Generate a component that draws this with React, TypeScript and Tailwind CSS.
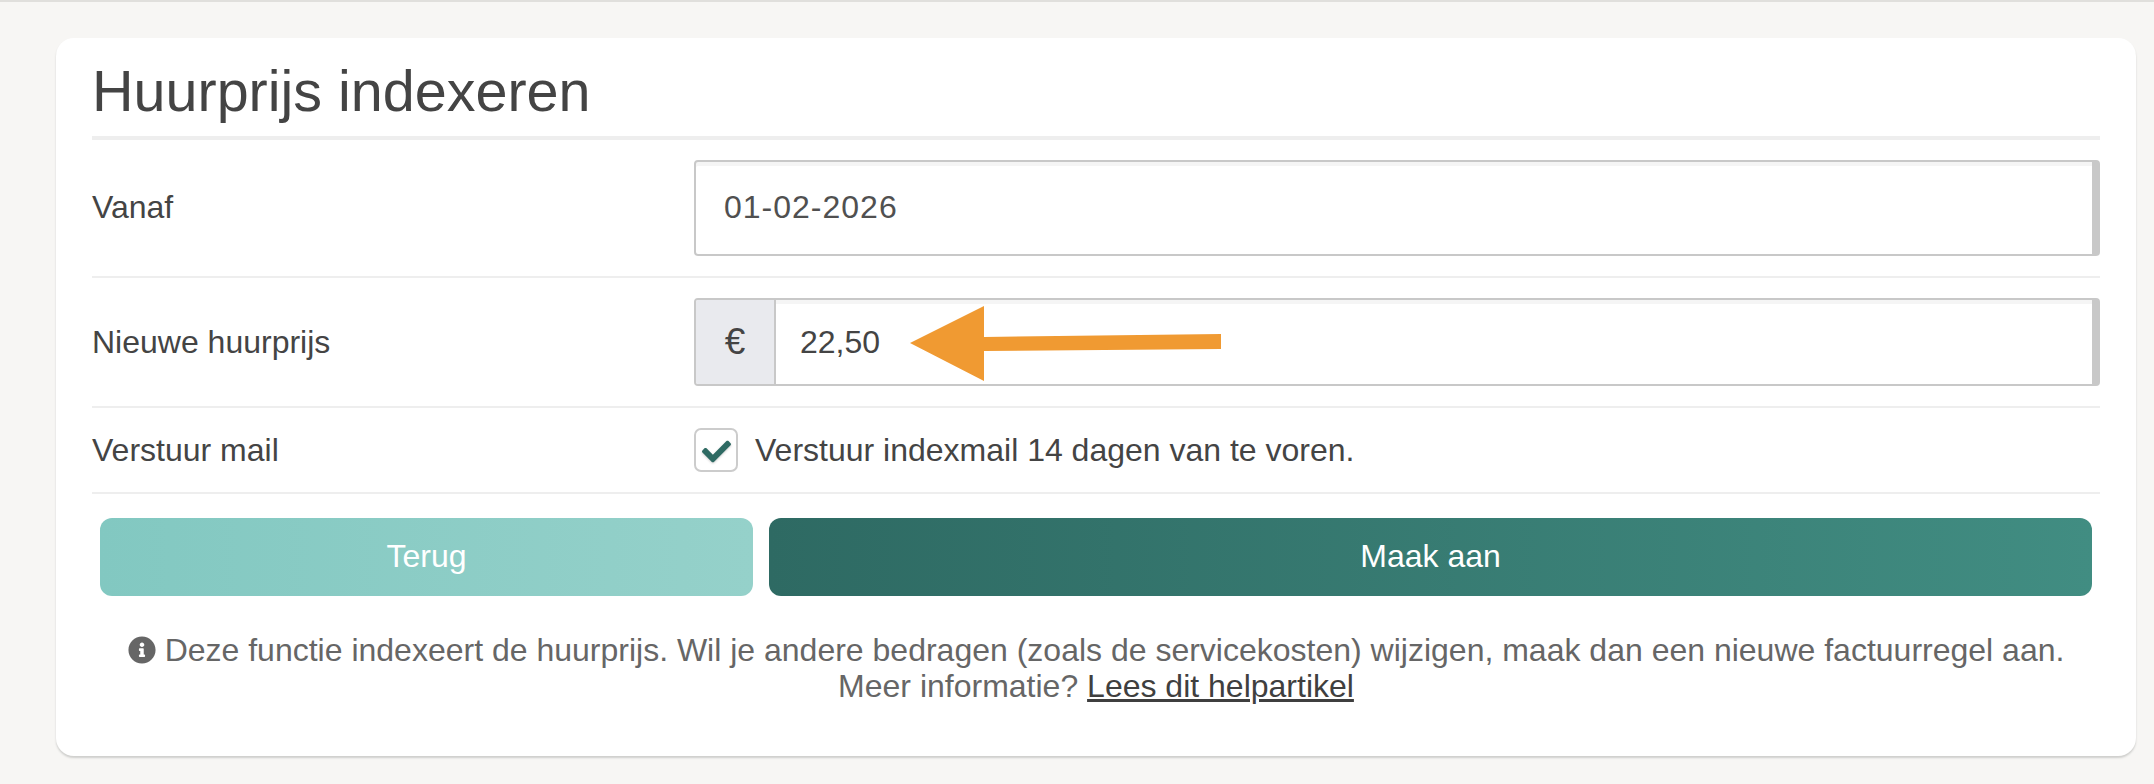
import { FaCheck, FaInfoCircle } from "react-icons/fa";

const font = "font-['Liberation_Sans','Helvetica',sans-serif]";

function Field({ children }: { children: React.ReactNode }) {
  return (
    <div className="flex-1 flex h-full rounded-[4px] border-2 border-r-[8px] border-[#c8c8c8] bg-white shadow-[inset_0_4px_0_#f5f5f5] overflow-hidden">
      {children}
    </div>
  );
}

export default function App() {
  return (
    <div className={`${font} h-[784px] overflow-hidden bg-[#f7f6f4] border-t-2 border-[#e0dfdc] pt-[36px] pl-[56px] pr-[18px]`}>
      <div className="h-[718px] rounded-[18px] bg-white shadow-[0_2px_2px_#cfcfcd] px-[36px]">
        <div className="h-[102px] border-b-4 border-[#eeeeee] flex items-center">
          <h1 className="text-[57.5px] leading-none font-normal text-[#444444] pt-[9px]">Huurprijs indexeren</h1>
        </div>
        <div className="h-[138px] py-[20px] border-b-2 border-[#eeeeee] flex items-center">
          <label className="w-[602px] text-[32px] text-[#444444] -translate-y-[1px]">Vanaf</label>
          <Field>
            <div className="flex items-center pl-[28px] text-[32px] text-[#505050] tracking-[1px] -translate-y-[1px]">01-02-2026</div>
          </Field>
        </div>
        <div className="h-[130px] py-[20px] border-b-2 border-[#eeeeee] flex items-center">
          <label className="w-[602px] text-[32px] text-[#444444]">Nieuwe huurprijs</label>
          <Field>
            <div className="w-[80px] bg-[#e9eaee] border-r-2 border-[#c8c8c8] flex items-center justify-center text-[37px] text-[#444444]">€</div>
            <div className="relative flex-1 flex items-center pl-[24px] text-[32px] text-[#444444]">
              22,50
              <svg className="absolute left-[134px] top-[4px]" width="313" height="77" viewBox="0 0 313 77">
                <polygon fill="#f09a32" points="0,39 74,2 74,33 311,30 311,45 74,47 74,77" />
              </svg>
            </div>
          </Field>
        </div>
        <div className="h-[86px] border-b-2 border-[#eeeeee] flex items-center">
          <label className="w-[602px] text-[32px] text-[#444444]">Verstuur mail</label>
          <div className="w-[44px] h-[44px] rounded-[7px] border-2 border-[#cccccc] bg-white flex items-center justify-center shrink-0">
            <FaCheck className="text-[#2e6a63] w-[29px] h-[29px] mt-[2px] drop-shadow-[0_1px_1px_rgba(0,0,0,0.2)]" />
          </div>
          <span className="ml-[17px] text-[32px] text-[#444444]">Verstuur indexmail 14 dagen van te voren.</span>
        </div>
        <div className="mx-[8px] mt-[24px] flex gap-[16px]">
          <button className="w-[653px] h-[78px] rounded-[12px] text-white text-[32px] bg-gradient-to-r from-[#82c8c1] to-[#95d1ca] pb-[2px]">Terug</button>
          <button className="flex-1 h-[78px] rounded-[12px] text-white text-[32px] bg-gradient-to-r from-[#2e6a63] to-[#418d82] pb-[2px]">Maak aan</button>
        </div>
        <div className="mt-[36px] text-center text-[32px] leading-[36px] text-[#666666]">
          <p><FaInfoCircle className="inline w-[28px] h-[28px] align-[-3px] mr-[9px]" />Deze functie indexeert de huurprijs. Wil je andere bedragen (zoals de servicekosten) wijzigen, maak dan een nieuwe factuurregel aan.</p>
          <p>Meer informatie? <a className="underline text-[#3f3f3f]">Lees dit helpartikel</a></p>
        </div>
      </div>
    </div>
  );
}
